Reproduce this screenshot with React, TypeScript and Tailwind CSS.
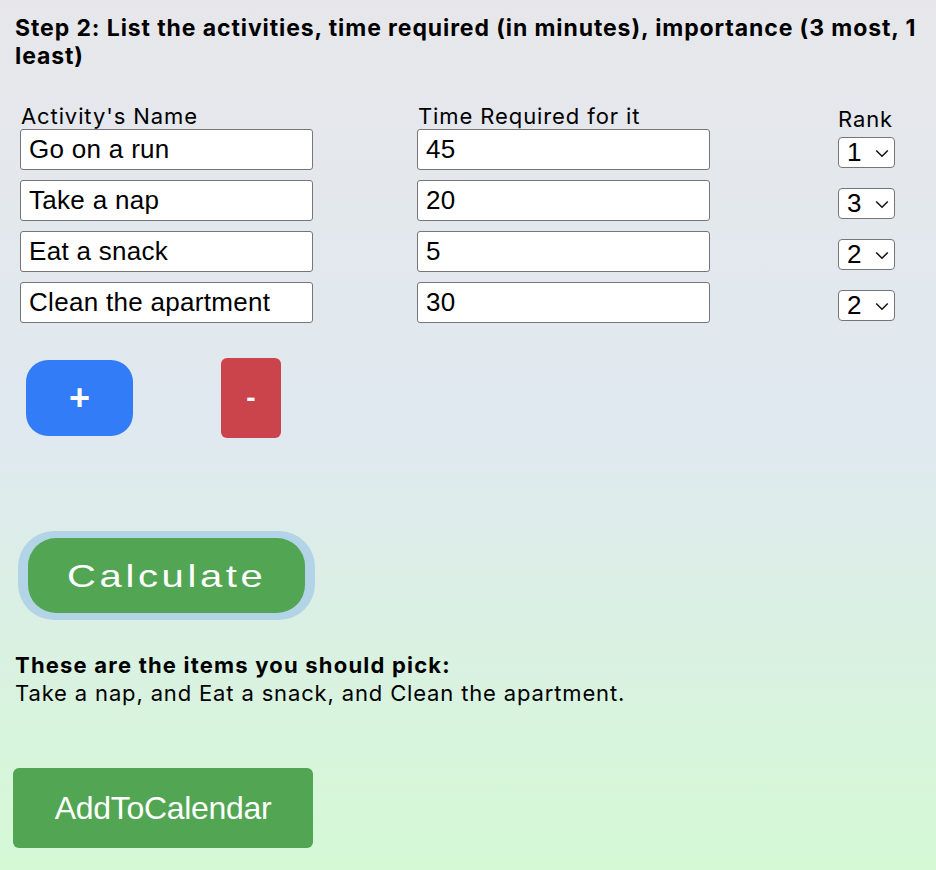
import { useState } from 'react'

const initialRows = [
    { name: "Go on a run", time: "45", rank: "1" },
    { name: "Take a nap", time: "20", rank: "3" },
    { name: "Eat a snack", time: "5", rank: "2" },
    { name: "Clean the apartment", time: "30", rank: "2" },
]

function RankSelect({ value, onChange }: { value: string; onChange: (v: string) => void }) {
    return (
        <div className="relative w-[57px] h-[31px]">
            <select
                value={value}
                onChange={(e) => onChange(e.target.value)}
                className="appearance-none w-full h-full bg-white border border-[#767676] rounded-[4px] pl-[8px] text-[26px] leading-[29px] text-black font-['Liberation_Sans',Arial,sans-serif]"
            >
                <option value="1">1</option>
                <option value="2">2</option>
                <option value="3">3</option>
            </select>
            <svg className="absolute right-[6px] top-[12px] pointer-events-none" width="14" height="9" viewBox="0 0 14 9" fill="none">
                <path d="M1.2 1.5 L7 7.2 L12.8 1.5" stroke="#111" strokeWidth="1.5" />
            </svg>
        </div>
    )
}

export default function App() {
    const [rows, setRows] = useState(initialRows)

    const update = (i: number, key: "name" | "time" | "rank", v: string) => {
        setRows(rows.map((r, idx) => (idx === i ? { ...r, [key]: v } : r)))
    }

    const inputCls =
        "w-[293px] h-[41px] bg-white border border-[#767676] rounded-[3px] px-[8px] text-[26px] tracking-[0.3px] text-black outline-none font-['Liberation_Sans',Arial,sans-serif]"

    return (
        <div className="min-h-[870px] w-full bg-gradient-to-b from-[#e7e7eb] via-[#dfe9ef] to-[#d4f9d4] px-[15px] pt-[14px] pb-[20px] font-['Inter','Liberation_Sans',sans-serif] text-black">
            <h2 className="text-[23px] leading-[28px] tracking-[0.9px] font-bold pr-[4px]">
                Step 2: List the activities, time required (in minutes), importance (3 most, 1 least)
            </h2>

            <div className="mt-[34px] pl-[5px]">
                <div className="flex h-[25px] text-[22px] leading-[25px] tracking-[0.9px]">
                    <div className="w-[397px] pl-[1px]">Activity's Name</div>
                    <div className="w-[421px] pl-[1px]">Time Required for it</div>
                    <div className="pt-[3px]">Rank</div>
                </div>
                <div className="flex flex-col gap-[10px]">
                    {rows.map((row, i) => (
                        <div key={i} className="flex items-start">
                            <div className="w-[397px]">
                                <input value={row.name} onChange={(e) => update(i, "name", e.target.value)} className={inputCls} />
                            </div>
                            <div className="w-[421px]">
                                <input value={row.time} onChange={(e) => update(i, "time", e.target.value)} className={inputCls} />
                            </div>
                            <div className="pt-[8px]">
                                <RankSelect value={row.rank} onChange={(v) => update(i, "rank", v)} />
                            </div>
                        </div>
                    ))}
                </div>
            </div>

            <div className="flex items-center mt-[35px] pl-[11px] font-['Liberation_Sans',Arial,sans-serif]">
                <button
                    onClick={() => setRows([...rows, { name: "", time: "", rank: "1" }])}
                    className="w-[107px] h-[76px] rounded-[22px] bg-[#327cf7] text-white text-[36px] leading-none font-bold"
                >
                    +
                </button>
                <button
                    onClick={() => setRows(rows.slice(0, -1))}
                    className="ml-[88px] w-[60px] h-[80px] rounded-[6px] bg-[#cc444b] text-white text-[28px] font-bold"
                >
                    -
                </button>
            </div>

            <div className="mt-[93px] pl-[3px] font-['Liberation_Sans',Arial,sans-serif]">
                <button className="w-[297px] h-[89px] rounded-[36px] bg-[#b3d4e6] p-[7px_10px]">
                    <span className="flex items-center justify-center w-full h-full rounded-[28px] bg-[#52a552] text-white">
                        <span className="inline-block text-[32px] tracking-[2.9px] scale-x-125">Calculate</span>
                    </span>
                </button>
            </div>

            <div className="mt-[31px] text-[22px] leading-[28px]">
                <p className="font-bold tracking-[1.2px]">These are the items you should pick:</p>
                <p className="tracking-[0.85px]">Take a nap, and Eat a snack, and Clean the apartment.</p>
            </div>

            <button className="mt-[61px] ml-[-2px] w-[300px] h-[80px] rounded-[6px] bg-[#52a552] text-white text-[32px] tracking-[-0.3px] font-['Liberation_Sans',Arial,sans-serif]">
                AddToCalendar
            </button>
        </div>
    )
}
